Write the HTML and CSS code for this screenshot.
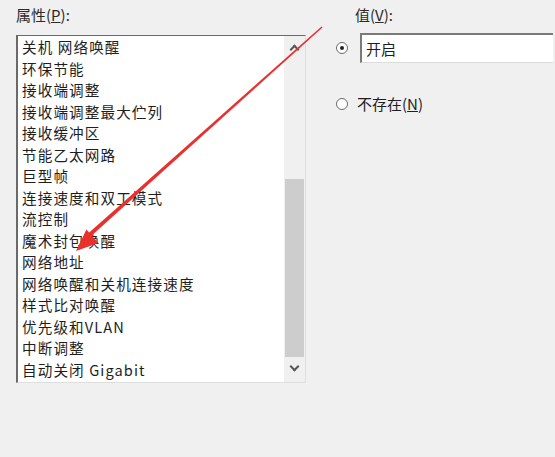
FILE: index.html
```html
<!DOCTYPE html>
<html>
<head>
    <title>属性</title>
    <link rel="stylesheet" href="styles.css">
</head>
<body>
  <div class="dialog">
    <div class="left">
      <div class="label">属性(<u>P</u>):</div>
      <div class="listbox">
        <ul class="items">
          <li>关机 网络唤醒</li>
          <li>环保节能</li>
          <li>接收端调整</li>
          <li>接收端调整最大伫列</li>
          <li>接收缓冲区</li>
          <li>节能乙太网路</li>
          <li>巨型帧</li>
          <li>连接速度和双工模式</li>
          <li>流控制</li>
          <li>魔术封包唤醒</li>
          <li>网络地址</li>
          <li>网络唤醒和关机连接速度</li>
          <li>样式比对唤醒</li>
          <li>优先级和VLAN</li>
          <li>中断调整</li>
          <li>自动关闭 Gigabit</li>
        </ul>
        <div class="scrollbar">
          <div class="chev up"></div>
          <div class="track"><div class="thumb"></div></div>
          <div class="chev down"></div>
        </div>
      </div>
    </div>
    <div class="right">
      <div class="label value-label">值(<u>V</u>):</div>
      <div class="opt">
        <span class="radio checked"></span>
        <div class="textbox">开启</div>
      </div>
      <div class="opt opt2">
        <span class="radio"></span>
        <span>不存在(<u>N</u>)</span>
      </div>
    </div>
  </div>

  <!-- red annotation arrow -->
  <svg class="arrow" width="555" height="457" viewBox="0 0 555 457">
    <polygon points="322.5,27.6 87.3,239.5 84.7,236.5 321.5,26.4" fill="#e8302e"/>
    <polygon points="76,251 86.4,229.6 98.4,243" fill="#e8302e"/>
  </svg>
</body>
</html>
```

FILE: styles.css
```css
body {
    margin: 0;
    background: #f0f0f0;
    font-family: "Noto Sans CJK SC", "Noto Sans", sans-serif;
    color: #1e1e1e;
    width: 555px;
    height: 457px;
    overflow: hidden;
    position: relative;
}

.dialog {
    display: flex;
}

.left {
    padding-left: 16px;
    width: 290px;
    flex-shrink: 0;
}

.label {
    font-size: 15px;
    line-height: 20px;
    padding-top: 5px;
    height: 30px;
    color: #2a2a2a;
}

.listbox {
    display: flex;
    height: 346px;
    background: #fff;
    border-top: 1px solid #6a6a6a;
    border-left: 2px solid #6a6a6a;
    border-right: 1px solid #dedede;
    border-bottom: 1px solid #dedede;
}

.items {
    list-style: none;
    margin: 0;
    padding: 0 0 0 4px;
    flex: 1;
    font-size: 14.6px;
    letter-spacing: 1.1px;
}

.items li {
    height: 21.5px;
    line-height: 21.5px;
    white-space: nowrap;
}

.scrollbar {
    width: 21px;
    display: flex;
    flex-direction: column;
    background: #f0f0f0;
}

.chev {
    height: 22px;
    position: relative;
}

.chev::after {
    content: "";
    position: absolute;
    left: 7px;
    width: 5px;
    height: 5px;
    border-left: 2px solid #555;
    border-top: 2px solid #555;
}

.chev.up::after {
    top: 10px;
    transform: rotate(45deg);
}

.chev.down::after {
    top: 3px;
    transform: rotate(225deg);
}

.track {
    flex: 1;
    padding-top: 121px;
    padding-bottom: 3px;
    display: flex;
    flex-direction: column;
}

.thumb {
    flex: 1;
    margin: 0 1px;
    background: #cdcdcd;
}

.right {
    padding-left: 30px;
    flex: 1;
}

.value-label {
    padding-left: 19px;
    height: 28px;
}

.opt {
    display: flex;
    align-items: center;
    font-size: 15px;
}

.opt2 {
    margin-top: 30px;
    gap: 9px;
}

.radio {
    width: 10px;
    height: 10px;
    border: 1px solid #6a6a6a;
    border-radius: 50%;
    background: #fff;
    position: relative;
    flex-shrink: 0;
}

.radio.checked::after {
    content: "";
    position: absolute;
    left: 3px;
    top: 3px;
    width: 4px;
    height: 4px;
    border-radius: 50%;
    background: #222;
}

.textbox {
    margin-left: 12px;
    width: 187px;
    height: 27px;
    line-height: 27px;
    padding-left: 4px;
    background: #fff;
    border-top: 2px solid #7a7a7a;
    border-left: 2px solid #7a7a7a;
    border-bottom: 1px solid #dcdcdc;
    font-size: 15px;
}

.arrow {
    position: absolute;
    left: 0;
    top: 0;
}
```
